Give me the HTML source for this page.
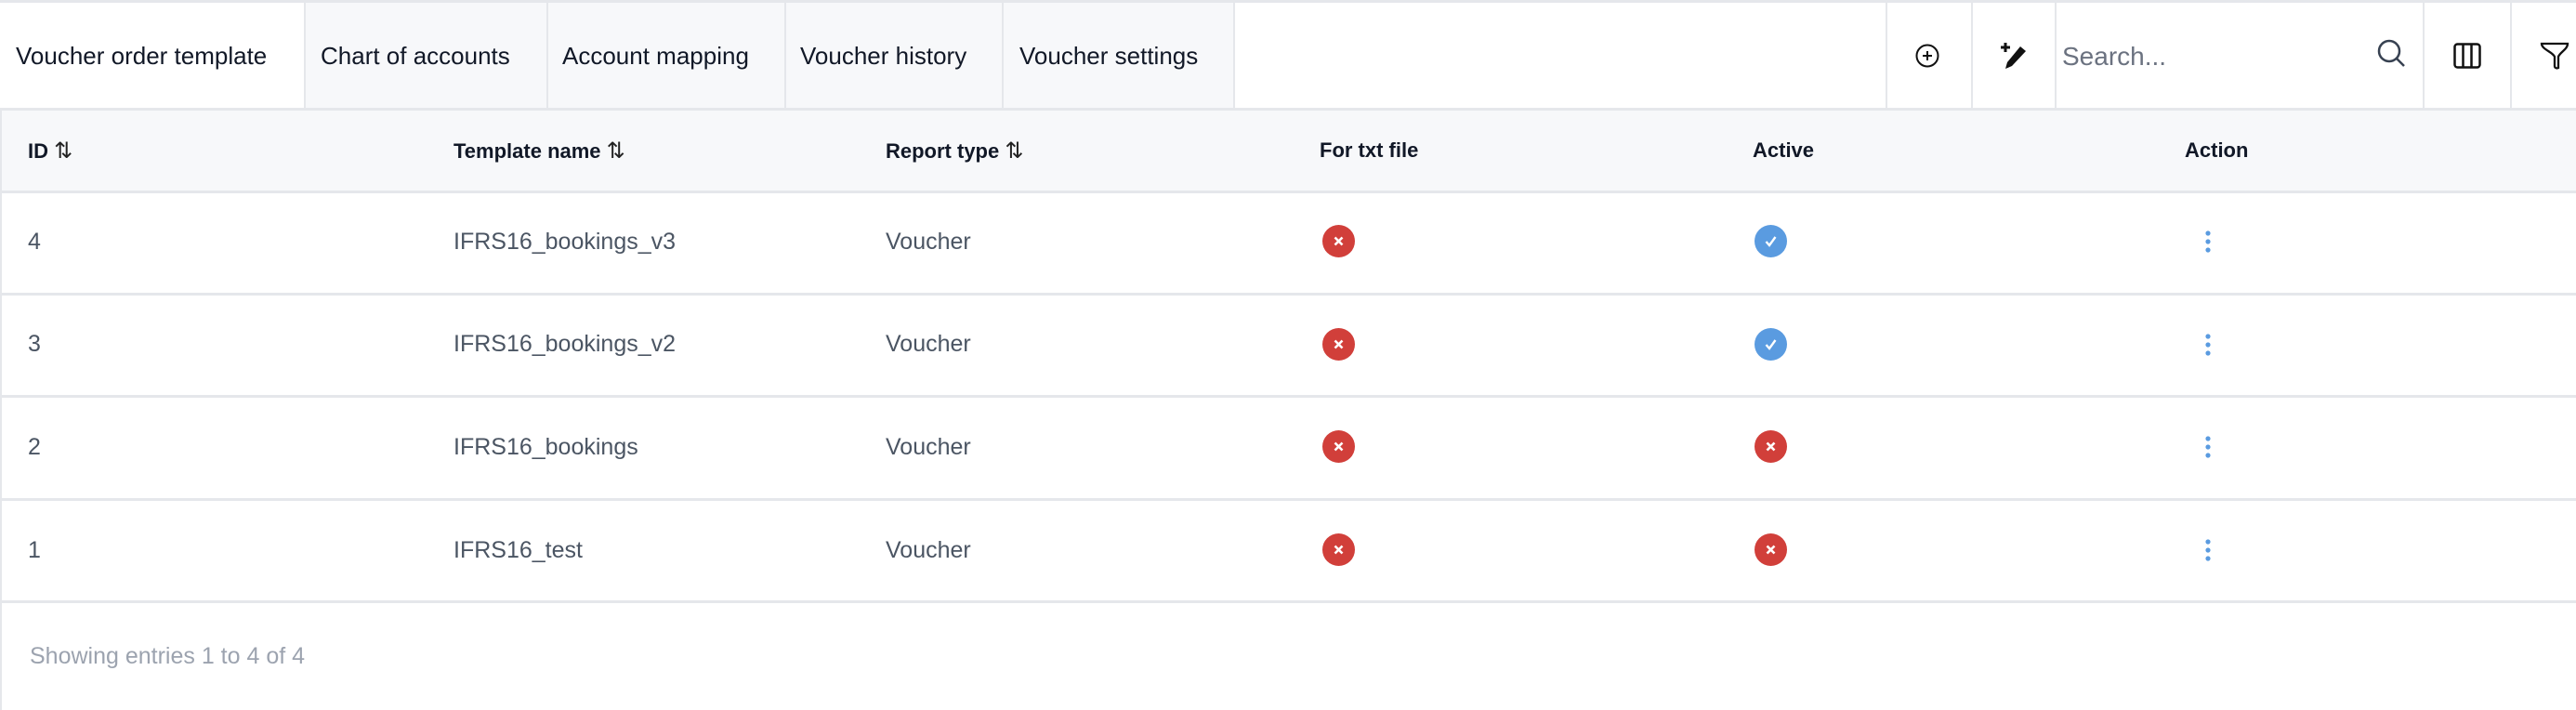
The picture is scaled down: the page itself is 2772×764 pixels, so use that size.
<!DOCTYPE html>
<html><head><meta charset="utf-8"><style>
*{margin:0;padding:0;box-sizing:border-box}
body{width:2772px;height:764px;background:#fff;font-family:"Liberation Sans",sans-serif;position:relative;overflow:hidden;color:#1f2937}
.a{position:absolute}
.hl{position:absolute;left:0;width:2772px;height:3px;background:#e5e7eb}
.vl{position:absolute;width:2px;background:#e5e7eb}
.tab{position:absolute;top:3px;height:114px;display:flex;align-items:center;font-size:26px;color:#111827}
.th{position:absolute;top:151px;font-size:22px;font-weight:bold;color:#111827;line-height:1}
.td{position:absolute;font-size:25px;color:#4b5563;line-height:1}
.ar{font-weight:normal;font-size:24px;color:#222}
</style></head><body>
<div class="hl" style="top:0"></div>
<div class="a" style="left:328px;top:3px;width:1000px;height:114px;background:#f7f8fa"></div>
<div class="vl" style="left:327px;top:3px;height:114px"></div>
<div class="vl" style="left:588px;top:3px;height:114px"></div>
<div class="vl" style="left:844px;top:3px;height:114px"></div>
<div class="vl" style="left:1078px;top:3px;height:114px"></div>
<div class="vl" style="left:1327px;top:3px;height:114px"></div>
<div class="vl" style="left:2029px;top:3px;height:114px"></div>
<div class="vl" style="left:2121px;top:3px;height:114px"></div>
<div class="vl" style="left:2211px;top:3px;height:114px"></div>
<div class="vl" style="left:2607px;top:3px;height:114px"></div>
<div class="vl" style="left:2701px;top:3px;height:114px"></div>
<div class="tab" style="left:17px">Voucher order template</div>
<div class="tab" style="left:345px">Chart of accounts</div>
<div class="tab" style="left:605px">Account mapping</div>
<div class="tab" style="left:861px">Voucher history</div>
<div class="tab" style="left:1097px">Voucher settings</div>
<svg class="a" style="left:2060px;top:46px" width="28" height="28" viewBox="0 0 28 28" fill="none" stroke="#111" stroke-width="2"><circle cx="14" cy="14" r="11.5"/><path d="M14 9v10M9 14h10"/></svg>
<svg class="a" style="left:2152px;top:44px" width="32" height="32" viewBox="0 0 32 32"><path d="M6 2v10M1 7h10" stroke="#111" stroke-width="3"/><path d="M22 6l6 5L13 27l-7 3 2-7z" fill="#111"/></svg>
<div class="a" style="left:2219px;top:45px;font-size:28px;color:#6b7280">Search...</div>
<svg class="a" style="left:2556px;top:40px" width="36" height="36" viewBox="0 0 36 36" fill="none" stroke="#374151" stroke-width="2.5"><circle cx="15" cy="15" r="11"/><path d="M23 23l8 8"/></svg>
<svg class="a" style="left:2640px;top:46px" width="30" height="28" viewBox="0 0 30 28" fill="none" stroke="#111" stroke-width="2.5"><rect x="1.5" y="1.5" width="27" height="25" rx="3"/><path d="M10.5 2v24M19.5 2v24"/></svg>
<svg class="a" style="left:2733px;top:44px" width="32" height="32" viewBox="0 0 32 32" fill="none" stroke="#111" stroke-width="2.3"><path d="M2 3h28c0 6-8 9-10 14v12c-2 1-4 0-4-2V17C14 12 2 9 2 3z"/></svg>
<div class="a" style="left:0;top:117px;width:2772px;height:89px;background:#f7f8fa"></div>
<div class="hl" style="top:116px"></div>
<div class="hl" style="top:205px"></div>
<div class="vl" style="left:0;top:117px;height:647px"></div>
<div class="th" style="left:30px">ID <span class="ar">⇅</span></div>
<div class="th" style="left:488px">Template name <span class="ar">⇅</span></div>
<div class="th" style="left:953px">Report type <span class="ar">⇅</span></div>
<div class="th" style="left:1420px">For txt file</div>
<div class="th" style="left:1886px">Active</div>
<div class="th" style="left:2351px">Action</div>
<div class="hl" style="top:315px"></div>
<div class="hl" style="top:425px"></div>
<div class="hl" style="top:536px"></div>
<div class="hl" style="top:646px"></div>
<div class="td" style="left:30px;top:248px">4</div><div class="td" style="left:488px;top:248px">IFRS16_bookings_v3</div><div class="td" style="left:953px;top:248px">Voucher</div>
<div class="td" style="left:30px;top:358px">3</div><div class="td" style="left:488px;top:358px">IFRS16_bookings_v2</div><div class="td" style="left:953px;top:358px">Voucher</div>
<div class="td" style="left:30px;top:469px">2</div><div class="td" style="left:488px;top:469px">IFRS16_bookings</div><div class="td" style="left:953px;top:469px">Voucher</div>
<div class="td" style="left:30px;top:580px">1</div><div class="td" style="left:488px;top:580px">IFRS16_test</div><div class="td" style="left:953px;top:580px">Voucher</div>
<svg width="0" height="0" style="position:absolute"><defs>
<g id="xx"><circle cx="17.5" cy="17.5" r="17.5" fill="#d13f3a"/><path d="M13.5 13.5l8 8M21.5 13.5l-8 8" stroke="#fff" stroke-width="2.6"/></g>
<g id="cc"><circle cx="17.5" cy="17.5" r="17.5" fill="#5a9be0"/><path d="M12.5 18l3.5 4 6.5-9" stroke="#fff" stroke-width="2.4" fill="none"/></g>
<g id="dd"><circle cx="3" cy="3" r="2.6" fill="#5a9be0"/><circle cx="3" cy="12" r="2.6" fill="#5a9be0"/><circle cx="3" cy="21" r="2.6" fill="#5a9be0"/></g>
</defs></svg>
<svg class="a" style="left:1423px;top:242px" width="35" height="35"><use href="#xx"/></svg>
<svg class="a" style="left:1423px;top:353px" width="35" height="35"><use href="#xx"/></svg>
<svg class="a" style="left:1423px;top:463px" width="35" height="35"><use href="#xx"/></svg>
<svg class="a" style="left:1423px;top:574px" width="35" height="35"><use href="#xx"/></svg>
<svg class="a" style="left:1888px;top:242px" width="35" height="35"><use href="#cc"/></svg>
<svg class="a" style="left:1888px;top:353px" width="35" height="35"><use href="#cc"/></svg>
<svg class="a" style="left:1888px;top:463px" width="35" height="35"><use href="#xx"/></svg>
<svg class="a" style="left:1888px;top:574px" width="35" height="35"><use href="#xx"/></svg>
<svg class="a" style="left:2373px;top:248px" width="6" height="24"><use href="#dd"/></svg>
<svg class="a" style="left:2373px;top:359px" width="6" height="24"><use href="#dd"/></svg>
<svg class="a" style="left:2373px;top:469px" width="6" height="24"><use href="#dd"/></svg>
<svg class="a" style="left:2373px;top:580px" width="6" height="24"><use href="#dd"/></svg>
<div class="td" style="left:32px;top:694px;color:#9ca3af">Showing entries 1 to 4 of 4</div>
</body></html>
